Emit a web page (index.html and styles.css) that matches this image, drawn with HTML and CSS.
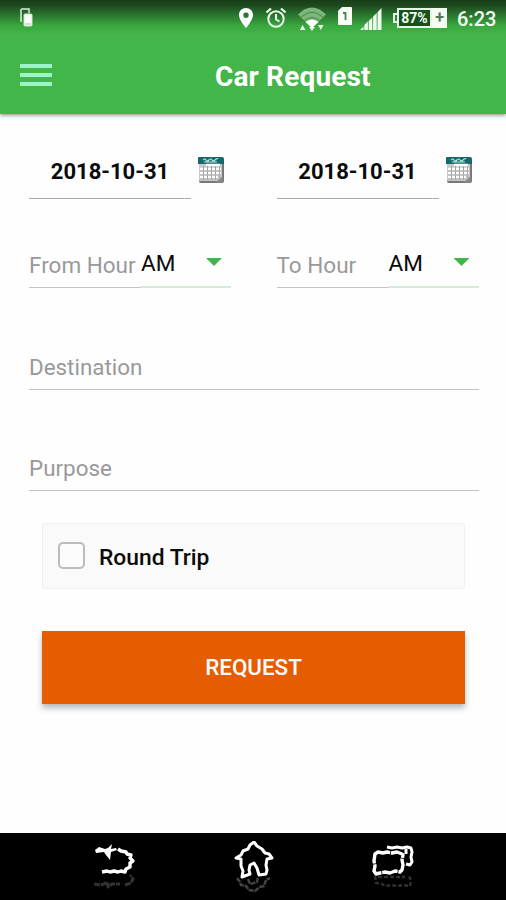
FILE: index.html
```html
<!DOCTYPE html>
<html lang="en">
<head>
<meta charset="utf-8">
<title>Car Request</title>
<link rel="stylesheet" href="styles.css">
</head>
<body>
<svg class="defs" width="0" height="0" aria-hidden="true">
  <symbol id="calendar" viewBox="0 0 28 28">
    <path d="M2 4v21q0 2 2 2h21q2 0 2-2V4z" fill="#777"/>
    <path d="M2 4v20q0 1 1 1h21q1 0 1-1V4z" fill="#c9c9c9"/>
    <path d="M1 2q0-1 1-1h23q2 0 2 2v5H1z" fill="#17686d"/>
    <path d="M6 4q2-2 3 0t3 0 3 0 3 0 3-1M7 6h13" stroke="#b5e0df" stroke-width="1.2" fill="none"/>
    <path d="M9 9h14M3 13h21M3 17h21M3 21h18" stroke="#fff" stroke-width="2.4"/>
    <path d="M6.500 10v14M10.500 10v14M14.500 10v14M18.500 10v14M22.500 10v12" stroke="#a3a3a3" stroke-width="1"/>
    <path d="M3 15h21M3 19h21M3 23h21" stroke="#b4b4b4" stroke-width="1"/>
    <path d="M17 26q5-1 9-7v6q0 2-2 2z" fill="#888"/>
  </symbol>
</svg>
<header class="appbar">
  <div class="status">
    <svg class="i-copy" width="14" height="20" viewBox="0 0 14 20"><path d="M3 13H2V2q0-1 1-1h7v4" fill="none" stroke="#d8efd8" stroke-width="1.500"/><rect x="5" y="6" width="8" height="12" rx="1" fill="#fff" stroke="#c5e8c5"/><path d="M6 16h6" stroke="#9bc99b"/></svg>
    <svg class="i-pin" width="16" height="22" viewBox="0 0 16 22"><path fill="#fff" fill-rule="evenodd" d="M8 1C3.900 1 1 4 1 8c0 5 7 13 7 13s7-8 7-13c0-4-2.900-7-7-7zm0 4.500a2.700 2.700 0 1 1 0 5.400 2.700 2.700 0 0 1 0-5.400z"/></svg>
    <svg class="i-alarm" width="22" height="22" viewBox="0 0 22 22" fill="none" stroke="#e9f8e9" stroke-width="2"><circle cx="11" cy="12" r="7.700"/><path d="M11 7v5.500l3.500 2"/><path d="M1.500 5.500l4.500-4M20.500 5.500l-4.500-4" stroke-width="2.300"/></svg>
    <svg class="i-wifi" width="28" height="25" viewBox="0 0 28 25"><path d="M0 7.500q14-14 28 0L14 21z" fill="#7cb67c"/><path d="M3 10q11-9.500 22 0M6.500 13.500q7.500-6 15 0" fill="none" stroke="#3c8a40" stroke-width="1"/><path d="M7.500 15q6.500-5 13 0L14 21z" fill="#fff"/><path d="M2 23l2.500-5 3 5zM11 20h6l-3 4zM20 18h5.500l-2.700 5z" fill="#e7f8e7"/></svg>
    <svg class="i-sim" width="14" height="18" viewBox="0 0 14 18"><path d="M4 0h9q1 0 1 1v16q0 1-1 1H1q-1 0-1-1V4z" fill="#f7fff7"/><path d="M5 6h2.500v7" fill="none" stroke="#567a56" stroke-width="1.800"/></svg>
    <svg class="i-signal" width="22" height="22" viewBox="0 0 22 22"><path d="M0 22l3.500-3.500V22zM4.300 22v-5l3.600-3.600V22zM8.700 22v-9l3.600-3.500V22zM13.100 22V8.500l3.600-3.500v17zM17.500 22V4.300L21.500 0v22z" fill="#edfbed"/></svg>
    <div class="battery"><span class="cap"></span><span class="level">87%</span><span class="plus">+</span></div>
    <span class="clock">6:23</span>
  </div>
  <div class="toolbar">
    <div class="menu"><span></span><span></span><span></span></div>
    <h1 class="title">Car Request</h1>
  </div>
</header>
<main class="form">
  <div class="columns dates">
    <div class="date-field"><div class="date">2018-10-31</div><svg class="calendar" width="28" height="28"><use href="#calendar"/></svg></div>
    <div class="date-field"><div class="date">2018-10-31</div><svg class="calendar" width="28" height="28"><use href="#calendar"/></svg></div>
  </div>
  <div class="columns hours">
    <div class="hour-field"><div class="hour">From Hour</div><div class="ampm"><span>AM</span><i class="caret"></i></div></div>
    <div class="hour-field"><div class="hour">To Hour</div><div class="ampm"><span>AM</span><i class="caret"></i></div></div>
  </div>
  <div class="input">Destination</div>
  <div class="input">Purpose</div>
  <div class="check-card"><span class="box"></span><span class="check-label">Round Trip</span></div>
  <button class="request">REQUEST</button>
</main>
<nav class="navbar">
  <svg width="44" height="54" viewBox="0 0 44 54" fill="none" stroke-linejoin="round"><path d="M1 9l4-3 6 2 3-1 4-4-1 5 5-1 1 2-6 2-1 8-4-5-2-3-8 1z" fill="#fff"/><path d="M24 8l3 2 5 1 1 2 4 1-1 3 3 3-3 2v4l-4 2-1 3-4-1-3 1-4-1-4 1-3-1-5 1" stroke="#fff" stroke-width="3.400"/><path d="M0 43l6 1 4-1 3-2 1 5 4-3h8m5 1l6-2 2-4-3-4" stroke="#333" stroke-width="3" stroke-dasharray="6 1"/></svg>
  <svg class="home" width="44" height="54" viewBox="0 0 44 54" fill="none" stroke-linejoin="round"><path d="M4 17l5-3 2-4 5-2 2-4 4-3 3 4 5 3 3 4 4 1 3 4-5 1-1 6 1 5-1 4-7 1-2-7-3-5-4 2-1 5 1 4-8 3 1-6-2-5v-7z" stroke="#fff" stroke-width="3"/><path d="M5 37l3 4 1 3 5 1 3 4 6 1 5-4 4-1 2-6 4-2M16 38l2 5 7-2 1-5" stroke="#434343" stroke-width="2.500" stroke-dasharray="5 1"/></svg>
  <svg width="44" height="54" viewBox="0 0 44 54" fill="none" stroke-linejoin="round"><path d="M3 13l3-2 5 1 4-1 5 1 5-1 5 2 1 1-1 5 1 5-1 5-2 2-5-1-5 2-5-1-5 1-4 1-2-3 1-5-1-5z" stroke="#fff" stroke-width="3.400" stroke-dasharray="16 .8"/><path d="M15 6l5 1 5-1 5 1 5-1 4 1 1 4-1 5 1 5-2 3-4-1M34 8v5" stroke="#fff" stroke-width="3"/><path d="M3 35l1 7 6 1 4 2 5-1 6 1 6-1 7 1 1-5-2-5M6 36h27" stroke="#303030" stroke-width="2.500" stroke-dasharray="4 2"/></svg>
</nav>
</body>
</html>
```
FILE: styles.css
```css
* { box-sizing: border-box; }
body {
  margin: 0;
  height: 900px;
  display: flex;
  flex-direction: column;
  background: #fefefe;
  font-family: Roboto, sans-serif;
  color: #0b0b0b;
  overflow: hidden;
}
.defs { position: absolute; }
svg { display: block; flex: none; }

.appbar {
  height: 114px;
  flex: none;
  background: linear-gradient(#183d19 0, #1c481e 5px, #2c7a30 16px, #3aa83f 26px, #43b649 36px);
  box-shadow: 0 1px 4px rgba(0, 0, 0, .5);
}
.status { height: 38px; display: flex; align-items: flex-start; padding-left: 19px; }
.i-copy { margin-top: 8px; }
.i-pin { margin: 7px 0 0 205px; }
.i-alarm { margin: 7px 0 0 11px; }
.i-wifi { margin: 7px 0 0 11px; }
.i-sim { margin: 7px 0 0 12px; }
.i-signal { margin: 8px 0 0 8px; }
.battery { display: flex; align-items: center; margin: 8px 0 0 11px; height: 20px; }
.cap { width: 4px; height: 10px; border: 2px solid #e6f7e6; border-right: 0; }
.level {
  width: 35px; height: 20px; border: 2px solid #e6f7e6;
  background: #17511b; color: #f2fff2;
  font: bold 14px/16px Roboto, sans-serif; text-align: center;
}
.plus { width: 15px; height: 20px; background: #f4fff4; color: #537653; font: bold 16px/19px Roboto, sans-serif; text-align: center; }
.clock { margin: 7px 0 0 10px; color: #f2fff2; font-size: 20px; line-height: 24px; font-weight: 500; }

.toolbar { height: 76px; display: flex; align-items: center; padding: 0 0 2px 20px; }
.menu { width: 32px; display: grid; gap: 5px; }
.menu span { height: 4px; background: #9bf4ca; }
.title { margin: 4px 0 0 163px; color: #fff; font-size: 28px; line-height: 34px; font-weight: 700; letter-spacing: .15px; white-space: nowrap; }

.form { flex: 1; padding: 31px 27px 0 29px; }
.columns { display: grid; grid-template-columns: 202px 202px; gap: 45.5px; }
.date-field { display: flex; height: 54px; }
.date { width: 162px; border-bottom: 1px solid #aaa; text-align: center; font-size: 22px; line-height: 54px; font-weight: 700; }
.calendar { margin: 11px 0 0 6px; }
.hours { margin-top: 35px; }
.hour-field { display: flex; height: 54px; }
.hour { width: 112px; border-bottom: 1px solid #c4c4c4; color: #999; font-size: 22.500px; line-height: 62px; white-space: nowrap; }
.ampm { width: 90px; border-bottom: 2px solid #d5eadd; display: flex; justify-content: space-between; padding-right: 9px; font-size: 22.500px; line-height: 58px; }
.caret { width: 16px; height: 8px; margin-top: 24px; background: #3fb54a; clip-path: polygon(0 0, 100% 0, 50% 100%); }
.input { height: 54px; margin-top: 48px; border-bottom: 1px solid #c4c4c4; color: #999; font-size: 22.400px; line-height: 62px; }
.input + .input { margin-top: 47px; }
.check-card {
  height: 66px; margin: 32px 14px 0 13px; padding: 0 0 2px 15px;
  display: flex; align-items: center; gap: 14px;
  background: #fafafa; border: 1px solid #f0f0f0; border-radius: 3px;
}
.box { width: 27px; height: 27px; border: 2px solid #bcbcbc; border-radius: 5px; background: #fcfcfc; }
.check-label { font-size: 22.800px; font-weight: 500; line-height: 30px; padding-top: 6px; }
.request {
  display: block; width: 423px; height: 73px; margin: 42px 0 0 13px; padding: 0 0 1px;
  border: 0; background: #e65c00; color: #fff;
  font: 500 22.400px/30px Roboto, sans-serif;
  box-shadow: 0 4px 6px rgba(60, 70, 80, .38);
}
.navbar {
  height: 67px; flex: none; padding: 8px 90px 0 94px;
  display: flex; justify-content: space-between; align-items: flex-start;
  background: #000;
}
.home { margin-right: 3px; }
```
